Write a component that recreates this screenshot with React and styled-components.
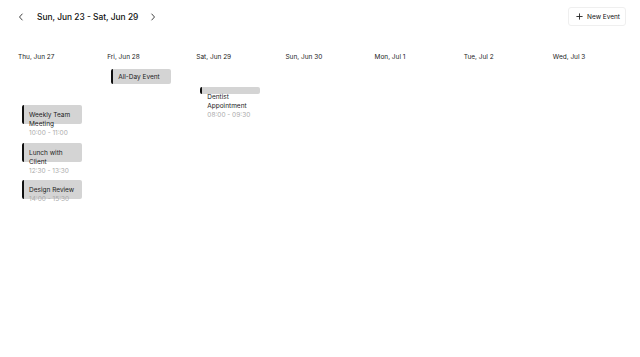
import React from "react";
import styled, { createGlobalStyle } from "styled-components";

const Global = createGlobalStyle`
  html, body { margin: 0; padding: 0; background: #fff; }
  body { font-family: Inter, "Noto Sans", sans-serif; color: #111; }
  * { box-sizing: border-box; }
`;

const Page = styled.div`
  width: 640px;
  height: 357px;
  background: #fff;
`;

const Toolbar = styled.div`
  display: flex;
  align-items: center;
  justify-content: space-between;
  padding: 7px 14px 0 16px;
  height: 26px;
`;

const NavGroup = styled.div`
  display: flex;
  align-items: center;
  gap: 11px;
`;

const NavButton = styled.button`
  border: none;
  background: none;
  padding: 0;
  width: 10px;
  height: 12px;
  display: flex;
  align-items: center;
  justify-content: center;
  color: #444;
  cursor: pointer;
`;

const Title = styled.div`
  font-size: 8.4px;
  font-weight: 500;
  color: #111;
  margin-right: -1px;
`;

const NewButton = styled.button`
  display: flex;
  align-items: center;
  gap: 4px;
  height: 19px;
  padding: 0 5px 0 7px;
  border: 1px solid #efefef;
  border-radius: 3px;
  background: #fff;
  font-family: Inter, sans-serif;
  font-size: 6.5px;
  font-weight: 400;
  color: #111;
`;

const Grid = styled.div`
  display: grid;
  grid-template-columns: repeat(7, 1fr);
  padding: 0 6px 0 10px;
  margin-top: 27px;
`;

const Column = styled.div`
  display: flex;
  flex-direction: column;
  min-width: 0;
`;

const DayLabel = styled.div`
  padding-left: 8px;
  font-size: 6.5px;
  font-weight: 400;
  line-height: 9px;
  color: #222;
`;

const EventList = styled.div`
  display: flex;
  flex-direction: column;
  padding-left: 12px;
  margin-top: ${(p) => p.$offset}px;
`;

const AllDayChip = styled.div`
  width: 60px;
  height: 15px;
  display: flex;
  align-items: center;
  padding-left: 5px;
  background: #d4d4d4;
  border-left: 2px solid #111;
  border-radius: 2px;
  font-size: 6.5px;
  font-weight: 400;
  color: #222;
`;

const EventChip = styled.div`
  width: 60px;
  height: ${(p) => p.$height}px;
  margin-bottom: 18.5px;
  padding: 6px 4px 0 5px;
  background: #d4d4d4;
  border-left: 2px solid #111;
  border-radius: 2px;
  overflow: visible;
`;

const EventTitle = styled.div`
  font-size: 6.5px;
  font-weight: 400;
  line-height: 9px;
  color: #222;
`;

const EventTime = styled.div`
  font-size: 6.5px;
  line-height: 9px;
  color: #aaa;
`;

const Chevron = ({ dir }) => (
  <svg width="6" height="8" viewBox="0 0 6 8" fill="none">
    <path
      d={dir === "left" ? "M4.2 1 L1.5 4 L4.2 7" : "M1.8 1 L4.5 4 L1.8 7"}
      stroke="#444"
      strokeWidth="1"
      strokeLinecap="round"
      strokeLinejoin="round"
    />
  </svg>
);

const Plus = () => (
  <svg width="7" height="7" viewBox="0 0 7 7">
    <path d="M3.5 0.8 V6.2 M0.8 3.5 H6.2" stroke="#222" strokeWidth="0.9" strokeLinecap="round" />
  </svg>
);

const days = [
  {
    label: "Thu, Jun 27",
    offset: 43,
    events: [
      { title: "Weekly Team Meeting", time: "10:00 - 11:00", height: 19 },
      { title: "Lunch with Client", time: "12:30 - 13:30", height: 19 },
      { title: "Design Review", time: "14:00 - 15:30", height: 19 },
    ],
  },
  { label: "Fri, Jun 28", offset: 7, allDay: "All-Day Event", events: [] },
  {
    label: "Sat, Jun 29",
    offset: 25,
    events: [{ title: "Dentist Appointment", time: "08:00 - 09:30", height: 6.5 }],
  },
  { label: "Sun, Jun 30", offset: 0, events: [] },
  { label: "Mon, Jul 1", offset: 0, events: [] },
  { label: "Tue, Jul 2", offset: 0, events: [] },
  { label: "Wed, Jul 3", offset: 0, events: [] },
];

export default function App() {
  return (
    <Page>
      <Global />
      <Toolbar>
        <NavGroup>
          <NavButton aria-label="Previous week">
            <Chevron dir="left" />
          </NavButton>
          <Title>Sun, Jun 23 - Sat, Jun 29</Title>
          <NavButton aria-label="Next week">
            <Chevron dir="right" />
          </NavButton>
        </NavGroup>
        <NewButton>
          <Plus />
          New Event
        </NewButton>
      </Toolbar>
      <Grid>
        {days.map((d) => (
          <Column key={d.label}>
            <DayLabel>{d.label}</DayLabel>
            <EventList $offset={d.offset}>
              {d.allDay && <AllDayChip>{d.allDay}</AllDayChip>}
              {d.events.map((e) => (
                <EventChip key={e.title} $height={e.height}>
                  <EventTitle>{e.title}</EventTitle>
                  <EventTime>{e.time}</EventTime>
                </EventChip>
              ))}
            </EventList>
          </Column>
        ))}
      </Grid>
    </Page>
  );
}
